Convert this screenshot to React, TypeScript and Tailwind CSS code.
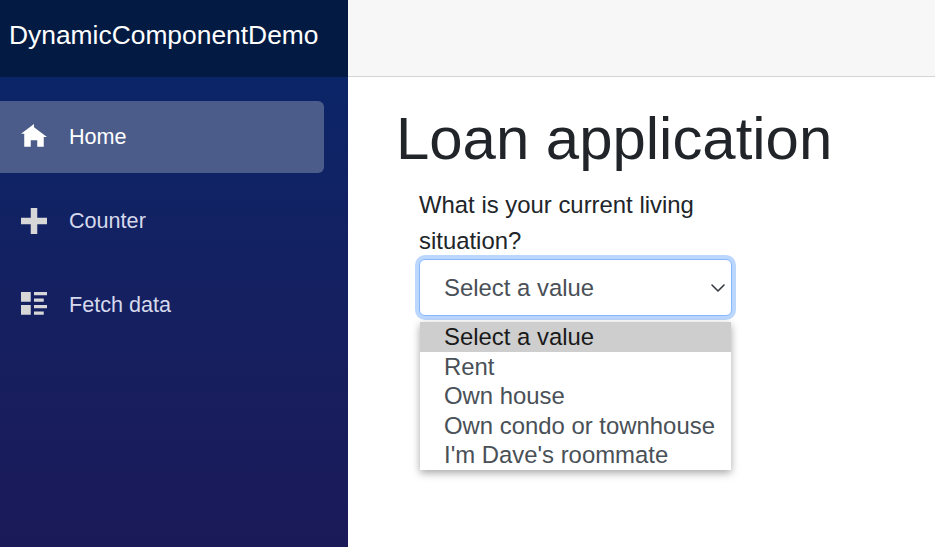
import React from "react";

const HomeIcon = () => (
  <svg viewBox="0 0 8 8" className="w-[26px] h-[26px] fill-current">
    <path d="M4 0l-4 3h1v4h2v-2h2v2h2v-3.03l1 .03-4-3z" />
  </svg>
);

const PlusIcon = () => (
  <svg viewBox="0 0 8 8" className="w-[26px] h-[26px] fill-current">
    <path d="M3 0v3h-3v2h3v3h2v-3h3v-2h-3v-3h-2z" />
  </svg>
);

const ListIcon = () => (
  <svg viewBox="0 0 8 8" className="w-[26px] h-[26px] fill-current">
    <path d="M0 0v3h3v-3h-3zm4 0v1h4v-1h-4zm0 2v1h3v-1h-3zm-4 2v3h3v-3h-3zm4 0v1h4v-1h-4zm0 2v1h3v-1h-3z" />
  </svg>
);

const NavItem = ({ icon, label, active }: { icon: React.ReactNode; label: string; active?: boolean }) => (
  <div className={`h-[72px] w-[324px] flex items-center rounded-r-[6px] pl-[21px] ${active ? "bg-[#4b5c8b] text-white" : "text-[#d6d9ec]"}`}>
    <span className={`w-[48px] shrink-0 ${active ? "text-white" : "text-[#d7d7d7]"}`}>{icon}</span>
    <span className="text-[21.6px]">{label}</span>
  </div>
);

export default function App() {
  const options = ["Rent", "Own house", "Own condo or townhouse", "I'm Dave's roommate"];

  return (
    <div className="flex h-[547px] w-[935px] overflow-hidden bg-white font-['Liberation_Sans',Arial,sans-serif] text-[#212529]">
      <aside className="w-[348px] shrink-0 flex flex-col bg-gradient-to-b from-[#05276a] to-[#1b1a59]">
        <div className="h-[77px] shrink-0 flex items-start pl-[9px] pt-[17px] bg-[#031a43] text-white text-[26.4px] leading-[36px]">
          DynamicComponentDemo
        </div>
        <nav className="flex flex-col gap-[12px] pt-[24px]">
          <NavItem icon={<HomeIcon />} label="Home" active />
          <NavItem icon={<PlusIcon />} label="Counter" />
          <NavItem icon={<ListIcon />} label="Fetch data" />
        </nav>
      </aside>
      <main className="flex-1 flex flex-col">
        <div className="h-[77px] shrink-0 bg-[#f7f7f7] border-b border-[#d6d5d5]" />
        <div className="pl-[48px] pt-[26px]">
          <h1 className="text-[59.9px] leading-[72px] mb-[12px]">Loan application</h1>
          <div className="relative ml-[23px] w-[313px]">
            <label className="block text-[23.9px] leading-[36px] w-[312px]">What is your current living situation?</label>
            <div className="h-[57px] w-[313px] flex items-center justify-between rounded-[6px] border border-[#86b7fe] bg-white pl-[24px] pr-[5px] text-[23.9px] text-[#495057] shadow-[0_0_0_4px_#bcd7fd]">
              <span>Select a value</span>
              <svg viewBox="0 0 16 16" className="w-[16px] h-[16px] fill-none stroke-[#343a40] stroke-[1.6]">
                <path d="m2 5 6 6 6-6" strokeLinecap="round" strokeLinejoin="round" />
              </svg>
            </div>
            <div className="absolute left-[1px] top-[135px] w-[311px] bg-white text-[23.9px] leading-[29.6px] text-[#495057] shadow-[0_3px_8px_rgba(0,0,0,0.35)]">
              <div className="bg-[#cecece] pl-[24px] text-[#1a1a1a]">Select a value</div>
              {options.map((o) => (
                <div key={o} className="pl-[24px]">{o}</div>
              ))}
            </div>
          </div>
        </div>
      </main>
    </div>
  );
}
